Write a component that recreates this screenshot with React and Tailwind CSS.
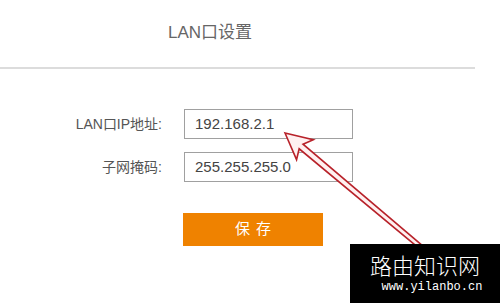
export default function App() {
  const font = { fontFamily: '"Liberation Sans", "Noto Sans CJK SC", sans-serif' };
  return (
    <div className="relative w-[500px] h-[303px] bg-white overflow-hidden" style={font}>
      <div className="w-[475px] h-[69px] border-b-2 border-[#dcdcdc] flex items-center pl-[168px] pb-[2px]">
        <span className="text-[17px] text-[#666]">LAN口设置</span>
      </div>

      <div className="flex flex-col gap-[13px] pt-[40px]">
        <div className="flex items-center">
          <label className="w-[162px] text-right text-[14px] text-[#555]">LAN口IP地址:</label>
          <div className="ml-[22px] w-[169px] h-[30px] border border-[#a0a0a0] flex items-center pl-[10px] text-[15px] text-[#444]">
            192.168.2.1
          </div>
        </div>
        <div className="flex items-center">
          <label className="w-[162px] text-right text-[14px] text-[#555]">子网掩码:</label>
          <div className="ml-[22px] w-[169px] h-[30px] border border-[#a0a0a0] flex items-center pl-[10px] text-[15px] text-[#444]">
            255.255.255.0
          </div>
        </div>
        <div className="pl-[183px] pt-[18px]">
          <button className="w-[140px] h-[33px] bg-[#ef8200] text-white text-[15px] tracking-[6px] pl-[6px]">
            保存
          </button>
        </div>
      </div>

      <svg className="absolute inset-0" width="500" height="303" viewBox="0 0 500 303">
        <g transform="translate(285 133) rotate(40)">
          <polygon
            points="0,0 26,-13 21,-3 200,-2 200,2 21,3 26,13"
            fill="#fff0f0"
            stroke="#b8222a"
            strokeWidth="1.6"
            strokeLinejoin="miter"
          />
        </g>
      </svg>

      <div className="absolute left-[350px] top-[244px] w-[150px] h-[59px] bg-black flex flex-col items-center pt-[5px]">
        <span className="text-[22px] leading-[30px] text-white" style={{ fontFamily: '"Noto Sans CJK SC", sans-serif', fontWeight: 300 }}>
          路由知识网
        </span>
        <span className="text-[12px] leading-[16px] text-white pl-[14px]" style={{ fontFamily: '"Liberation Mono", monospace' }}>
          www.yilanbo.cn
        </span>
      </div>
    </div>
  );
}
